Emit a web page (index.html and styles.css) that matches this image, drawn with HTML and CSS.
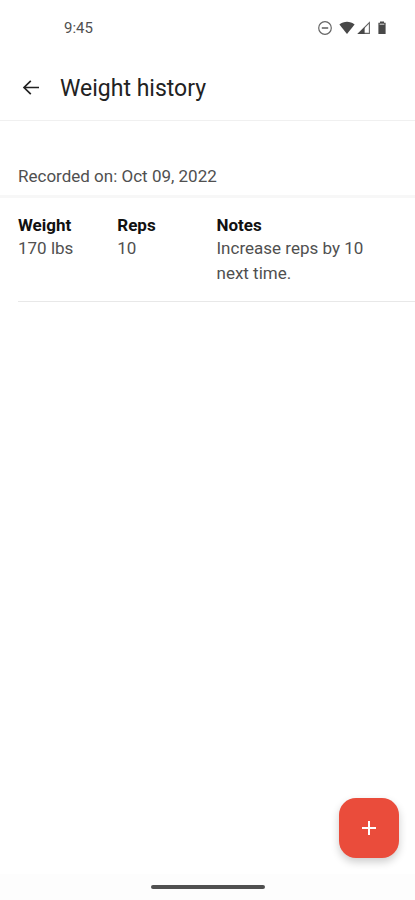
FILE: index.html
```html
<!DOCTYPE html>
<html lang="en">
<head>
  <meta charset="UTF-8" />
  <meta name="viewport" content="width=device-width, initial-scale=1.0"/>
  <title>Weight history</title>
  <link rel="stylesheet" href="styles.css">
</head>
<body>

  <div class="status-bar">
    <span class="clock">9:45</span>
    <div class="status-icons">
      <svg class="dnd" width="16" height="16" viewBox="0 0 16 16">
        <circle cx="8" cy="8" r="6.3" fill="none" stroke="#666" stroke-width="1.2"/>
        <path d="M4.8 8h6.4" stroke="#666" stroke-width="1.6"/>
      </svg>
      <svg width="16" height="16" viewBox="0 0 16 16">
        <path d="M0.4 4.4C4.8 1 11.2 1 15.6 4.4L8 14z" fill="#484848"/>
      </svg>
      <svg width="14" height="16" viewBox="0 0 14 16">
        <path d="M1.6 13.4L12.4 2.6v10.8z" fill="none" stroke="#666" stroke-width="1.1"/>
        <path d="M0.6 14L7.6 7v7z" fill="#484848"/>
      </svg>
      <svg class="battery" width="10" height="16" viewBox="0 0 10 16">
        <path d="M3 1.4h4v1.4h1.6V14H1.4V2.8H3z" fill="#484848"/>
        <path d="M2.6 4.2h4.8" stroke="#ddd" stroke-width="1"/>
      </svg>
    </div>
  </div>

  <header class="app-bar">
    <button class="back" aria-label="Back">
      <svg width="18" height="18" viewBox="0 0 18 18">
        <path d="M17 8.5H2M8.8 1.8L2 8.5L8.8 15.2" fill="none" stroke="#222" stroke-width="1.7"/>
      </svg>
    </button>
    <h1>Weight history</h1>
  </header>

  <main>
    <h2 class="date">Recorded on: Oct 09, 2022</h2>
    <table class="records">
      <thead>
        <tr>
          <th class="col-small">Weight</th>
          <th class="col-small">Reps</th>
          <th>Notes</th>
        </tr>
      </thead>
      <tbody>
        <tr>
          <td>170 lbs</td>
          <td>10</td>
          <td>Increase reps by 10 next time.</td>
        </tr>
      </tbody>
    </table>
  </main>

  <button class="fab" aria-label="Add record">
    <svg width="16" height="16" viewBox="0 0 16 16">
      <path d="M8 1v14M1 8h14" stroke="#fff" stroke-width="2"/>
    </svg>
  </button>

  <div class="nav-bar">
    <div class="nav-handle"></div>
  </div>

</body>
</html>
```

FILE: styles.css
```css
:root {
  --main-color: #ea4c3b;
  --text-color: #505050;
  --line-color: #f0f0f0;
}

* {
  box-sizing: border-box;
}

body {
  margin: 0;
  min-height: 100vh;
  display: flex;
  flex-direction: column;
  background: #fff;
  color: var(--text-color);
  font-family: Roboto, "Liberation Sans", sans-serif;
  font-size: 17px;
}

button {
  border: none;
  padding: 0;
  cursor: pointer;
}

svg {
  display: block;
}

/* system bar */
.status-bar {
  display: flex;
  justify-content: space-between;
  align-items: center;
  height: 56px;
  padding: 0 28px 0 64px;
}

.clock {
  font-size: 15px;
}

.status-icons {
  display: flex;
  align-items: center;
  gap: 2px;
}

.dnd {
  margin-right: 4px;
}

.battery {
  margin-left: 4px;
}

.app-bar {
  display: flex;
  align-items: center;
  gap: 20px;
  height: 65px;
  padding: 0 20px;
  border-bottom: 1px solid var(--line-color);
}

.back {
  display: flex;
  justify-content: flex-end;
  width: 20px;
  background: none;
}

h1 {
  margin: 0;
  color: #222;
  font-size: 23px;
  font-weight: 400;
}

main {
  flex: 1;
}

.date {
  margin: 0;
  padding: 43px 18px 6px;
  border-bottom: 3px solid #f7f7f7;
  font-size: 17px;
  font-weight: 400;
  line-height: 25px;
}

.records {
  width: calc(100% - 18px);
  margin: 16px 0 0 18px;
  border-collapse: collapse;
  border-bottom: 1px solid #e8e8e8;
  table-layout: fixed;
  text-align: left;
}

.records th {
  padding: 0;
  color: #111;
  font-weight: 700;
  line-height: 22px;
}

.records td {
  padding: 0 0 15px;
  line-height: 25px;
  vertical-align: top;
}

.records th:last-child,
.records td:last-child {
  padding-right: 32px;
}

.col-small {
  width: 25%;
}

/* floating add button */
.fab {
  position: fixed;
  right: 16px;
  bottom: 42px;
  display: flex;
  justify-content: center;
  align-items: center;
  width: 60px;
  height: 60px;
  border-radius: 17px;
  background: var(--main-color);
  box-shadow: 0 4px 8px rgba(0,0,0,0.2);
}

.nav-bar {
  display: flex;
  justify-content: center;
  align-items: center;
  height: 26px;
  background: #fdfdfd;
}

.nav-handle {
  width: 114px;
  height: 4px;
  border-radius: 2px;
  background: #505050;
}
```
